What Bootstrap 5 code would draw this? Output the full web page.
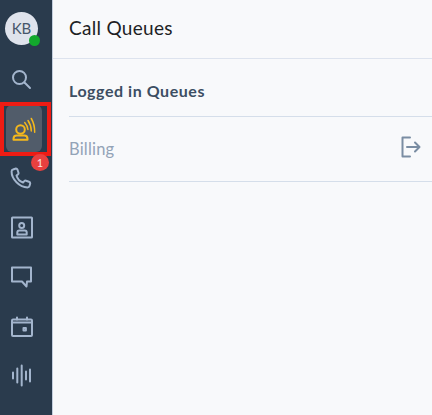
<!DOCTYPE html>
<html lang="en">
<head>
  <meta charset="UTF-8">
  <meta name="viewport" content="width=device-width, initial-scale=1.0">
  <title>Call Queues</title>
  <link href="https://cdn.jsdelivr.net/npm/bootstrap@5.3.0/dist/css/bootstrap.min.css" rel="stylesheet">
  <style>
    body {
        background: #f8f9fb;
        font-family: Lato, "Liberation Sans", sans-serif;
        height: 415px;
        overflow: hidden;
    }
    .side-rail {
        width: 52px;
        height: 415px;
        background: #2a3b4d;
        flex-shrink: 0;
        padding-top: 12px;
        position: relative;
    }
    .avatar-circle {
        width: 33px;
        height: 33px;
        margin-left: 5px;
        margin-bottom: 10px;
        border-radius: 50%;
        background: #dfe3ec;
        color: #46566a;
        font-size: 15px;
        line-height: 33px;
        text-align: center;
        position: relative;
    }
    .status-dot {
        position: absolute;
        right: -2px;
        bottom: -1px;
        width: 11px;
        height: 11px;
        border-radius: 50%;
        background: #12a82c;
    }
    .rail-item {
        height: 49px;
        width: 42px;
        display: flex;
        align-items: center;
        justify-content: center;
        color: #a3b5cd;
    }
    .rail-item svg {
        width: 24px;
        height: 24px;
        overflow: visible;
        fill: none;
        stroke: currentColor;
        stroke-width: 2;
        stroke-linecap: round;
        stroke-linejoin: round;
    }
    .rail-item svg .arc-lines { stroke-width: 1.5; }
    .rail-active {
        background: #515c6a;
        border-radius: 6px;
        color: #f5b81c;
        width: 36px;
        height: 47px;
        margin: 1px 0 1px 6px;
    }
    .hilite-box {
        position: absolute;
        left: 0;
        top: 102px;
        width: 51px;
        height: 54px;
        border: 4px solid #ee1c14;
    }
    .count-badge {
        position: absolute;
        left: 31px;
        top: 154px;
        width: 18px;
        height: 17px;
        border-radius: 50%;
        background: #e8403f;
        color: #fbe4e4;
        font-size: 11px;
        line-height: 17px;
        text-align: center;
    }
    .main-pane { border-left: 1px solid #c3cedd; }
    .page-head {
        height: 59px;
        padding-left: 16px;
        padding-bottom: 2px;
        border-bottom: 1px solid #dde3ee;
        color: #1d2124;
        font-size: 19px;
        letter-spacing: .3px;
    }
    .queue-body { padding-left: 16px; }
    .queue-title {
        height: 58px;
        padding-top: 6px;
        border-bottom: 1px solid #d5deea;
        color: #3c4e63;
        font-size: 16px;
        letter-spacing: .55px;
        font-weight: 700;
    }
    .queue-row {
        height: 65px;
        border-bottom: 1px solid #d5deea;
        color: #93a3b7;
        font-size: 16.5px;
        letter-spacing: .2px;
    }
    .queue-row svg {
        width: 22px;
        height: 24px;
        margin-right: 10px;
        margin-top: -4px;
        fill: none;
        stroke: #7a8da3;
        stroke-width: 2;
        stroke-linejoin: round;
        stroke-linecap: round;
    }
  </style>
</head>
<body>
  <div class="d-flex">
    <div class="side-rail">
      <div class="avatar-circle">KB<span class="status-dot"></span></div>
      <!-- search -->
      <div class="rail-item">
        <svg viewBox="0 0 24 24"><circle cx="10.5" cy="9.5" r="6.5"/><path d="M15.5 14.5 21 20"/></svg>
      </div>
      <!-- queues -->
      <div class="rail-item rail-active">
        <svg viewBox="0 0 24 24"><circle cx="8.500" cy="12.500" r="4.300"/><path d="M1.500 22.800v-1c0-2 1.300-3.300 3.300-3.300h7.400c2 0 3.300 1.300 3.300 3.300v1z"/><path class="arc-lines" d="M12.700 5.500c1.800 2 2.900 4 3.200 7M16 3.500c2 2.800 3.200 6.300 3.300 10.500M19.300 1.500c2.200 3.800 3.400 8.500 3.400 13.700"/></svg>
      </div>
      <!-- phone -->
      <div class="rail-item">
        <svg viewBox="0 0 24 24"><path d="M4 3.500 7 2.500c.8 0 1.200.5 1.500 1.200l1 3c.2.700 0 1.200-.5 1.700L7.500 9.500c.8 3 3.500 6 6.500 7l1.300-1.400c.5-.5 1-.6 1.700-.4l3 1.100c.8.300 1.300.8 1.200 1.700l-.7 2.500c-.3 1-1 1.400-2 1.400C10.500 21.400 2.500 13 2.600 5.500c0-1 .4-1.700 1.400-2z"/></svg>
      </div>
      <!-- contacts -->
      <div class="rail-item">
        <svg viewBox="0 0 24 24"><rect x="3" y="2.500" width="20" height="20" rx=".5"/><circle cx="12.700" cy="10.500" r="2.500"/><path d="M8.300 19.500v-2c0-1.200.8-2 2-2h5.400c1.200 0 2 .8 2 2v2z"/></svg>
      </div>
      <!-- chat -->
      <div class="rail-item">
        <svg viewBox="0 0 24 24"><path d="M3 3.500h19v14h-4l-.5 5-4.500-5H3z"/></svg>
      </div>
      <!-- calendar -->
      <div class="rail-item">
        <svg viewBox="0 0 24 24"><rect x="3" y="6.500" width="20" height="16.500" rx="1"/><path d="M3 9.500h20M8 4.500v2M18 4.500v2"/><rect x="14.500" y="15" width="2.400" height="2.400"/></svg>
      </div>
      <!-- voicemail wave -->
      <div class="rail-item">
        <svg viewBox="0 0 24 24"><path d="M4 10.500v6M8.300 6.500v14M12.700 3.500v20M17 9.500v8M21 7.500v12"/></svg>
      </div>
      <span class="hilite-box"></span>
      <span class="count-badge">1</span>
    </div>
    <div class="main-pane flex-grow-1">
      <div class="page-head d-flex align-items-center">Call Queues</div>
      <div class="queue-body">
        <div class="queue-title d-flex align-items-center">Logged in Queues</div>
        <div class="queue-row d-flex align-items-center justify-content-between">
          <span>Billing</span>
          <svg viewBox="0 0 22 24"><path d="M10 2.500H2.500v19H10M7 12h12M15 7.500l4.500 4.500-4.500 4.500"/></svg>
        </div>
      </div>
    </div>
  </div>
  <script src="https://cdn.jsdelivr.net/npm/bootstrap@5.3.0/dist/js/bootstrap.bundle.min.js"></script>
</body>
</html>
